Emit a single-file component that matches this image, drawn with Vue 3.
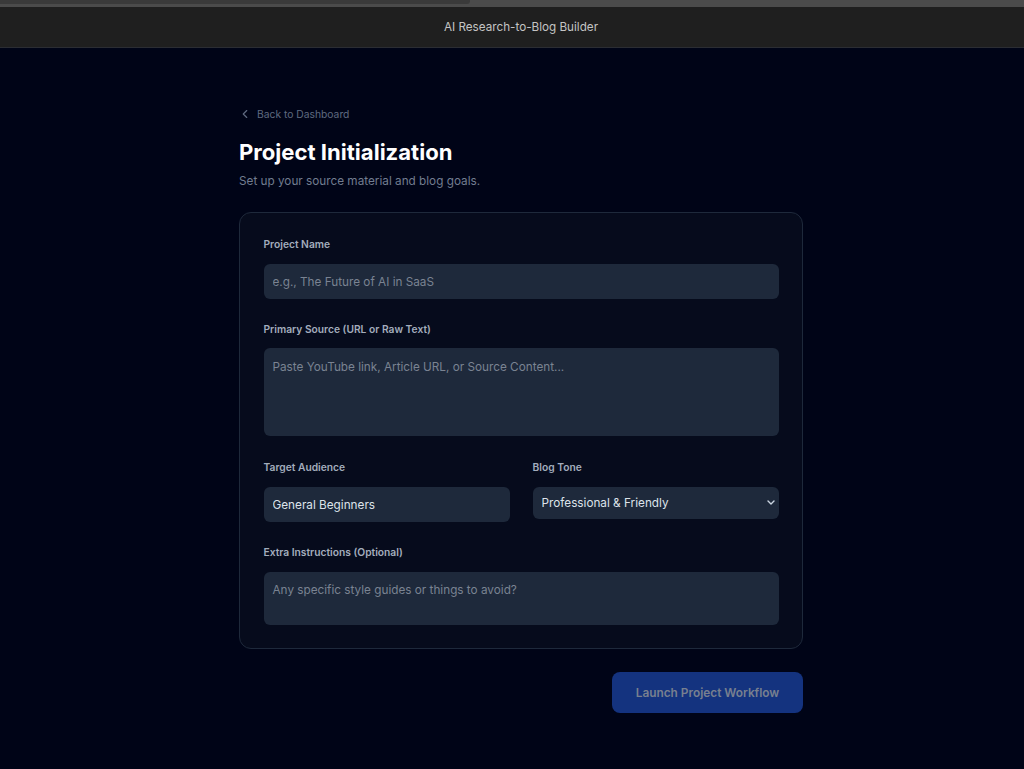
<template>
  <div class="app">
    <div class="chrome">
      <div class="chrome-tab"></div>
    </div>
    <header class="topbar">AI Research-to-Blog Builder</header>

    <main class="page">
      <a class="back" href="#">
        <svg class="back-icon" viewBox="0 0 24 24" fill="none" stroke="currentColor" stroke-width="2" stroke-linecap="round" stroke-linejoin="round">
          <path d="m15 18-6-6 6-6" />
        </svg>
        Back to Dashboard
      </a>
      <h1 class="title">Project Initialization</h1>
      <p class="subtitle">Set up your source material and blog goals.</p>

      <form class="card" @submit.prevent>
        <div class="field">
          <label class="label">Project Name</label>
          <input v-model="form.name" class="control input" placeholder="e.g., The Future of AI in SaaS" />
        </div>

        <div class="field">
          <label class="label">Primary Source (URL or Raw Text)</label>
          <textarea v-model="form.source" class="control source" placeholder="Paste YouTube link, Article URL, or Source Content..."></textarea>
        </div>

        <div class="two-col">
          <div>
            <label class="label">Target Audience</label>
            <input v-model="form.audience" class="control input" />
          </div>
          <div>
            <label class="label">Blog Tone</label>
            <div class="select-wrap">
              <select v-model="form.tone" class="control select">
                <option v-for="t in tones" :key="t">{{ t }}</option>
              </select>
              <svg class="select-arrow" viewBox="0 0 8 5" fill="none" stroke="currentColor" stroke-width="1.4" stroke-linecap="round" stroke-linejoin="round">
                <path d="m1 1 3 3 3-3" />
              </svg>
            </div>
          </div>
        </div>

        <div>
          <label class="label">Extra Instructions (Optional)</label>
          <textarea v-model="form.extra" class="control extra" placeholder="Any specific style guides or things to avoid?"></textarea>
        </div>
      </form>

      <div class="actions">
        <button class="submit" type="button" disabled>Launch Project Workflow</button>
      </div>
    </main>
  </div>
</template>

<script setup>
import { reactive } from 'vue'

const tones = ['Professional & Friendly', 'Casual', 'Academic']

const form = reactive({
  name: '',
  source: '',
  audience: 'General Beginners',
  tone: tones[0],
  extra: '',
})
</script>

<style>
html, body {
  margin: 0;
  background: #000417;
  overflow: hidden;
}
</style>

<style scoped>
.app {
  width: 1042px;
  height: 769px;
  background: #000417;
  font-family: Inter, "Liberation Sans", sans-serif;
  overflow: hidden;
}

.chrome {
  height: 7px;
  background: #4b4b4b;
}

.chrome-tab {
  width: 470px;
  height: 4px;
  background: #3a3a3a;
  border-radius: 0 0 3px 0;
}

.topbar {
  height: 40px;
  line-height: 40px;
  background: #1f1f1f;
  border-bottom: 1px solid #2b2d33;
  color: #c4c4c4;
  font-size: 11.7px;
  text-align: center;
}

.page {
  width: 564px;
  margin: 0 auto;
  padding-top: 58px;
}

.back {
  display: flex;
  align-items: center;
  gap: 5px;
  height: 16px;
  color: #5f6a80;
  font-size: 10.3px;
  text-decoration: none;
}

.back-icon {
  width: 14px;
  height: 14px;
  margin-left: -1px;
}

.title {
  margin: 14px 0 0;
  color: #fff;
  font-size: 22.1px;
  line-height: 32px;
  font-weight: 700;
}

.subtitle {
  margin: 5px 0 0;
  color: #727d90;
  font-size: 11.75px;
  line-height: 16px;
}

.card {
  margin-top: 23px;
  padding: 23.4px 23.5px 23px;
  box-sizing: border-box;
  background: #060b1c;
  border: 1px solid #1e293b;
  border-radius: 12px;
}

.field {
  margin-bottom: 22.4px;
}

.two-col {
  display: grid;
  grid-template-columns: 1fr 1fr;
  gap: 23px;
  margin-bottom: 22.6px;
}

.two-col .label {
  margin-bottom: 12.2px;
}

.label {
  display: block;
  margin-bottom: 11.2px;
  color: #a3adbd;
  font-size: 10.25px;
  line-height: 16px;
  font-weight: 600;
}

.control {
  display: block;
  width: 100%;
  box-sizing: border-box;
  padding: 10.5px 9px 9px;
  background: #1e293b;
  border: 0;
  border-radius: 6px;
  outline: none;
  color: #dde3ea;
  font-family: inherit;
  font-size: 11.75px;
  line-height: 17px;
  resize: none;
}

.control::placeholder {
  color: #7a8392;
  opacity: 1;
}

.input {
  height: 35px;
  padding: 10px 9px 9px;
}

.source {
  height: 88px;
  padding-top: 11px;
}

.extra {
  height: 53px;
}

.select-wrap {
  position: relative;
}

.select {
  height: 32px;
  padding: 2px 20px 0 9px;
  appearance: none;
}

.select-arrow {
  position: absolute;
  top: 13.5px;
  right: 4px;
  width: 8px;
  height: 5px;
  color: #cbd5e1;
}

.actions {
  display: flex;
  justify-content: flex-end;
  margin-top: 23px;
}

.submit {
  width: 191px;
  height: 41px;
  padding: 2px 0 0;
  background: #14337f;
  border: 0;
  border-radius: 8px;
  color: #78808f;
  font-family: inherit;
  font-size: 11.85px;
  font-weight: 600;
}
</style>
